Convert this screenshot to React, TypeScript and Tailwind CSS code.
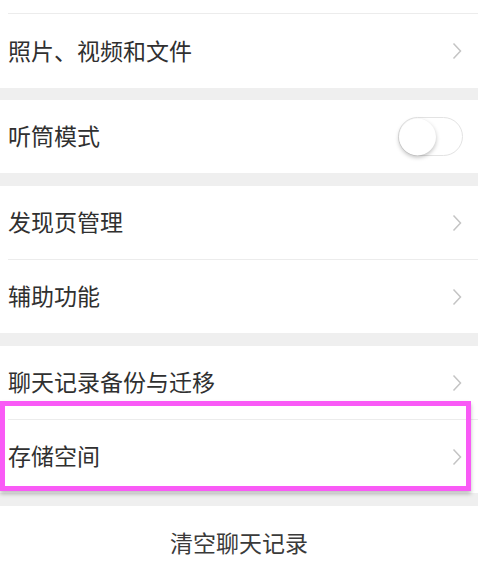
import React from 'react';

const font = { fontFamily: '"Noto Sans CJK SC", "Noto Sans", sans-serif' };

function Chevron() {
  return (
    <svg width="10" height="18" viewBox="0 0 10 18" className="shrink-0">
      <path d="M1.5 1.5 L8.5 9 L1.5 16.5" fill="none" stroke="#c4c4c4" strokeWidth="1.5" />
    </svg>
  );
}

function Row({ label, divider = false, right }: { label: string; divider?: boolean; right?: React.ReactNode }) {
  return (
    <div className="bg-white">
      {divider && <div className="ml-2 h-px bg-[#ececec]" />}
      <div className="flex h-[73px] items-center justify-between pl-2 pr-4">
        <span className="-mt-0.5 text-[23px] leading-none text-[#303030]">{label}</span>
        {right ?? <Chevron />}
      </div>
    </div>
  );
}

function Toggle() {
  return (
    <div className="relative mr-[-1px] h-[39px] w-[65px] rounded-full border-[1.5px] border-[#e3e3e3] bg-white">
      <div className="absolute left-0 top-1/2 h-[37px] w-[37px] -translate-y-1/2 rounded-full bg-white shadow-[0_2px_4px_rgba(0,0,0,0.25)]" />
    </div>
  );
}

function Gap({ h }: { h: string }) {
  return <div className={`${h} bg-[#efefef]`} />;
}

export default function App() {
  return (
    <div className="min-h-[566px] w-[478px] overflow-hidden bg-white" style={font}>
      <div className="h-[13px] bg-white" />
      <div className="bg-white">
        <div className="ml-2 h-px bg-[#ececec]" />
        <div className="flex h-[74px] items-center justify-between pl-2 pr-4">
          <span className="-mt-0.5 text-[23px] leading-none text-[#303030]">照片、视频和文件</span>
          <Chevron />
        </div>
      </div>
      <Gap h="h-[12px]" />
      <Row label="听筒模式" right={<Toggle />} />
      <Gap h="h-[13px]" />
      <Row label="发现页管理" />
      <Row label="辅助功能" divider />
      <Gap h="h-[13px]" />
      <div className="relative">
        <Row label="聊天记录备份与迁移" />
        <Row label="存储空间" divider />
        <div className="absolute left-0 top-[55px] h-[90px] w-[471px] border-[5px] border-[#f95af6] shadow-[0_3px_4px_rgba(0,0,0,0.25)]" />
      </div>
      <Gap h="h-[13px]" />
      <div className="flex h-[74px] items-center justify-center bg-white">
        <span className="-mt-0.5 text-[23px] leading-none text-[#3a3a3a]">清空聊天记录</span>
      </div>
    </div>
  );
}
